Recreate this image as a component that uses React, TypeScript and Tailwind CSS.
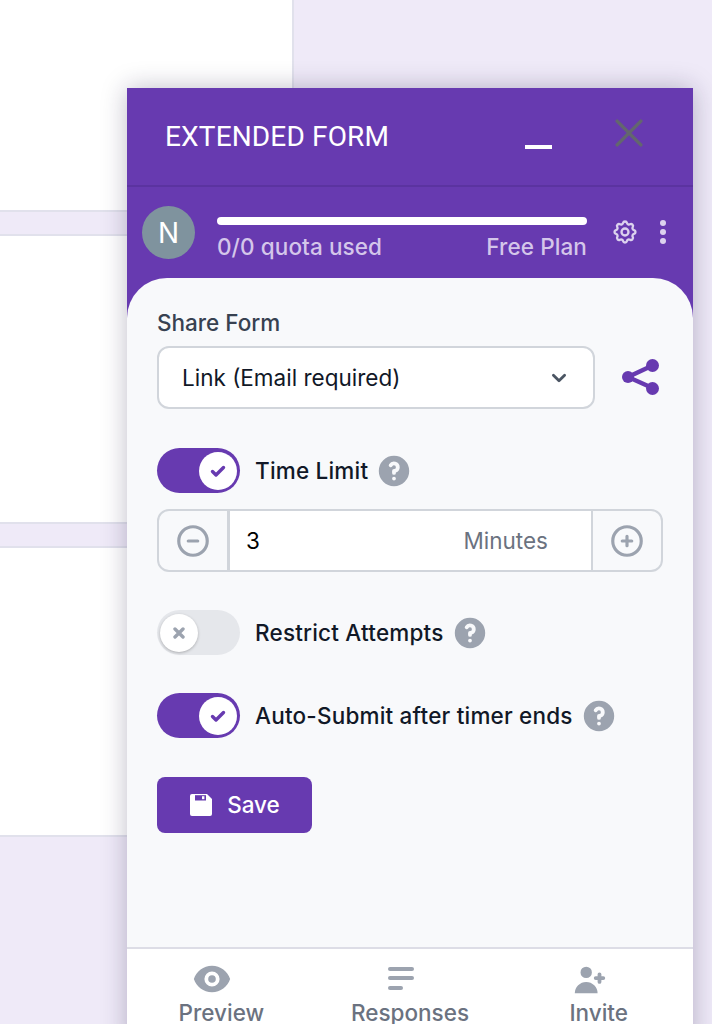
import { HiEye, HiOutlineCog, HiUserAdd, HiChevronDown, HiOutlineMinusCircle, HiOutlinePlusCircle, HiQuestionMarkCircle } from 'react-icons/hi';

const PURPLE = 'bg-[#673AB0]';

function Toggle({ on }: { on: boolean }) {
  if (on) {
    return (
      <div className={`flex h-[45px] w-[83px] shrink-0 items-center justify-end rounded-full ${PURPLE} pr-[3px]`}>
        <div className="flex h-[38px] w-[38px] items-center justify-center rounded-full bg-white">
          <svg viewBox="0 0 16 16" className="h-[16px] w-[16px]" fill="none" stroke="#673AB0" strokeWidth="3.4" strokeLinecap="round" strokeLinejoin="round">
            <path d="M2.5 8.5l3.5 3.5 7.5-7.5" />
          </svg>
        </div>
      </div>
    );
  }
  return (
    <div className="flex h-[45px] w-[83px] shrink-0 items-center rounded-full bg-[#E5E7EB] pl-[3px]">
      <div className="flex h-[38px] w-[38px] items-center justify-center rounded-full bg-white shadow-[0_1px_3px_rgba(0,0,0,0.25)]">
        <svg viewBox="0 0 12 12" className="h-[12px] w-[12px]" fill="none" stroke="#9CA3AF" strokeWidth="3.4" strokeLinecap="round">
          <path d="M2 2l8 8M10 2l-8 8" />
        </svg>
      </div>
    </div>
  );
}

function ToggleRow({ on, label, className }: { on: boolean; label: string; className: string }) {
  return (
    <div className={`flex items-center ${className}`}>
      <Toggle on={on} />
      <span className="ml-[15px] text-[22.5px] font-medium tracking-[0.2px] text-[#111827]">{label}</span>
      <HiQuestionMarkCircle className="ml-[7px] h-[38px] w-[38px] text-[#9CA3AF]" />
    </div>
  );
}

function Tab({ label, icon }: { label: string; icon: React.ReactNode }) {
  return (
    <div className="flex flex-1 flex-col items-center pt-[14px]">
      <div className="flex h-[34px] -translate-x-[9px] items-center justify-center">{icon}</div>
      <span className="mt-[4px] text-[22.5px] font-medium leading-[24px] text-[#6B7280]">{label}</span>
    </div>
  );
}

export default function App() {
  return (
    <div className="relative h-[1024px] w-[712px] overflow-hidden bg-[#EFEAF8] font-['Inter',sans-serif]">
      {/* form cards behind the popup */}
      <div className="flex w-[294px] flex-col gap-[22px]">
        <div className="h-[212px] border-r-2 border-b-2 border-[#E1E1EC] bg-white" />
        <div className="h-[290px] border-y-2 border-r-2 border-[#E1E1EC] bg-white" />
        <div className="h-[291px] border-y-2 border-r-2 border-[#E1E1EC] bg-white" />
      </div>

      {/* floating window */}
      <div className="absolute left-[127px] top-[88px] flex h-[960px] w-[566px] flex-col bg-[#F8F9FB] shadow-[0_0_24px_rgba(30,20,60,0.28)]">
        <div className={`flex h-[99px] shrink-0 items-center justify-between border-b-2 border-[#5B33A0] ${PURPLE} pl-[38px] pr-[50px]`}>
          <span className="font-['Roboto',sans-serif] text-[28px] font-normal tracking-[0.15px] text-white">EXTENDED FORM</span>
          <div className="flex items-center gap-[63px]">
            <div className="mt-[20px] h-[4px] w-[27px] bg-white" />
            <svg viewBox="0 0 26 26" className="mb-[8px] h-[28px] w-[28px]" fill="none" stroke="#63666E" strokeWidth="3.2" strokeLinecap="round">
              <path d="M2 2l22 22M24 2L2 24" />
            </svg>
          </div>
        </div>

        <div className={`flex h-[91px] shrink-0 ${PURPLE} pl-[15px] pr-[24px] pt-[19px]`}>
          <div className="flex h-[53px] w-[53px] shrink-0 items-center justify-center rounded-full bg-[#7F939E] text-[28px] text-white">N</div>
          <div className="ml-[22px] w-[370px] pt-[11px]">
            <div className="h-[8px] rounded-full bg-white" />
            <div className="mt-[8px] flex justify-between text-[22.5px] font-medium leading-[28px] tracking-[0.1px] text-[#D4C6EA]">
              <span>0/0 quota used</span>
              <span>Free Plan</span>
            </div>
          </div>
          <HiOutlineCog className="ml-[24px] mt-[12px] h-[28px] w-[28px] text-[#DCD2EE]" />
          <div className="ml-[21px] mt-[14px] flex flex-col gap-[3px]">
            <div className="h-[6px] w-[6px] rounded-full bg-[#DCD2EE]" />
            <div className="h-[6px] w-[6px] rounded-full bg-[#DCD2EE]" />
            <div className="h-[6px] w-[6px] rounded-full bg-[#DCD2EE]" />
          </div>
        </div>

        <div className={`flex-1 ${PURPLE}`}>
          <div className="flex h-[669px] flex-col rounded-t-[40px] bg-[#F8F9FB] px-[30px] pt-[31px]">
            <div className="text-[22.5px] font-medium leading-[28px] text-[#374151]">Share Form</div>
            <div className="mt-[9px] flex items-center">
              <div className="flex h-[63px] w-[438px] items-center justify-between rounded-[12px] border-2 border-[#D1D5DB] bg-white pl-[23px] pr-[20px] text-[22.5px] text-[#111827]">
                <span>Link (Email required)</span>
                <HiChevronDown className="h-[28px] w-[28px] text-[#4B5563]" />
              </div>
              <svg viewBox="0 0 37 37" className="ml-[27px] h-[37px] w-[37px]" fill="#673AB0" stroke="#673AB0">
                <path d="M30.5 6.5L6 18l24.5 11" fill="none" strokeWidth="4.4" />
                <circle cx="6" cy="18" r="6" stroke="none" />
                <circle cx="30.5" cy="6.5" r="6.5" stroke="none" />
                <circle cx="30.5" cy="29.5" r="6.5" stroke="none" />
              </svg>
            </div>

            <ToggleRow on label="Time Limit" className="mt-[39px]" />

            <div className="mt-[16px] flex h-[63px] w-[506px] rounded-[12px] border-2 border-[#D1D5DB]">
              <div className="flex w-[71px] items-center justify-center rounded-l-[12px] border-r-[3px] border-[#D1D5DB]">
                <HiOutlineMinusCircle className="h-[38px] w-[38px] text-[#9CA3AF]" />
              </div>
              <div className="flex flex-1 items-center justify-between bg-white pl-[16px] pr-[43px] text-[22.5px]">
                <span className="text-black">3</span>
                <span className="text-[#6B7280]">Minutes</span>
              </div>
              <div className="flex w-[70px] items-center justify-center border-l-2 border-[#D1D5DB]">
                <HiOutlinePlusCircle className="h-[38px] w-[38px] text-[#9CA3AF]" />
              </div>
            </div>

            <ToggleRow on={false} label="Restrict Attempts" className="mt-[38px]" />
            <ToggleRow on label="Auto-Submit after timer ends" className="mt-[38px]" />

            <div className={`mt-[39px] flex h-[56px] w-[155px] items-center justify-center gap-[14px] rounded-[8px] ${PURPLE} text-[22.5px] font-medium text-white`}>
              <svg viewBox="0 0 24 24" className="h-[24px] w-[24px]">
                <path fill="#fff" d="M3 1h15l5 5v15a2 2 0 0 1-2 2H3a2 2 0 0 1-2-2V3a2 2 0 0 1 2-2z" />
                <rect x="6" y="2.2" width="11" height="5.3" fill="#673AB0" />
                <rect x="13" y="3.2" width="2.4" height="3" fill="#fff" />
              </svg>
              <span>Save</span>
            </div>
          </div>

          <div className="flex h-[100px] border-t-2 border-[#DDDDE6] bg-white">
            <Tab label="Preview" icon={<HiEye className="mb-[2px] h-[38px] w-[38px] text-[#9CA3AF]" />} />
            <Tab
              label="Responses"
              icon={
                <svg viewBox="0 0 28 26" className="h-[26px] w-[28px]" fill="#9CA3AF">
                  <rect x="1" y="0" width="26" height="4" rx="2" />
                  <rect x="1" y="9" width="26" height="4" rx="2" />
                  <rect x="1" y="19" width="15" height="4" rx="2" />
                </svg>
              }
            />
            <Tab label="Invite" icon={<HiUserAdd className="h-[38px] w-[38px] text-[#9CA3AF]" />} />
          </div>
        </div>
      </div>
    </div>
  );
}
